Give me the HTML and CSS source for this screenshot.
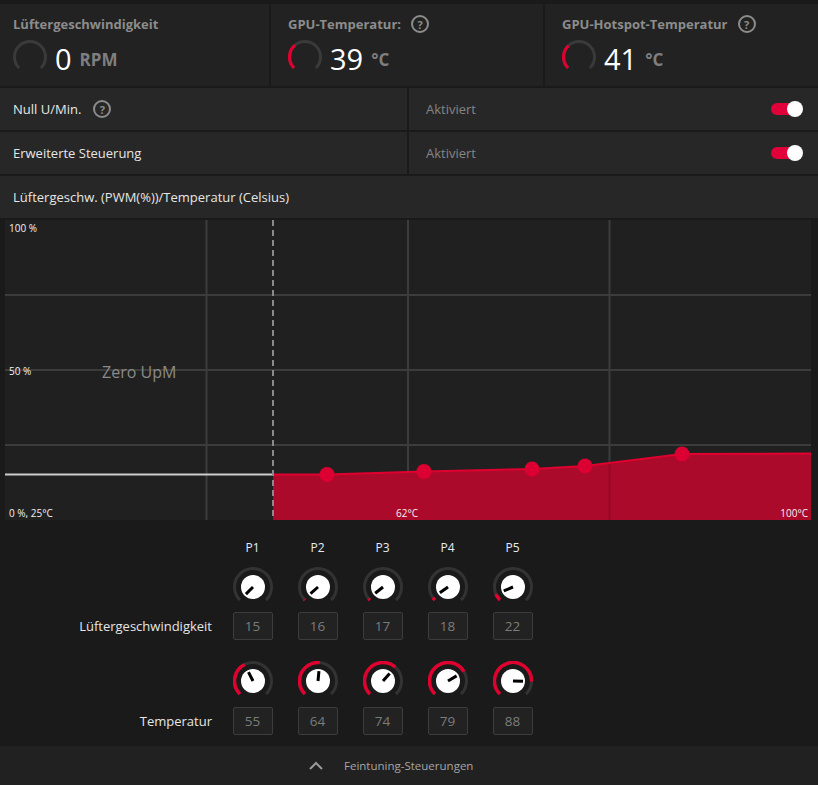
FILE: index.html
```html
<!DOCTYPE html>
<html lang="de">
<head>
<meta charset="utf-8">
<title>Lüftersteuerung</title>
<link rel="stylesheet" href="styles.css">
</head>
<body>
<div class="app">
  <div class="top">
    <div class="stats">
      <div class="stat stat-first">
        <div class="stat-title">Lüftergeschwindigkeit</div>
        <div class="stat-body">
          <svg class="gauge" width="36" height="36" viewBox="0 0 36 36">
            <path d="M7.04 28.96 A15.5 15.5 0 1 1 28.96 28.96" class="ring"/>
          </svg>
          <span class="stat-value">0</span><span class="stat-unit">RPM</span>
        </div>
      </div>
      <div class="stat">
        <div class="stat-title">GPU-Temperatur: <span class="help">?</span></div>
        <div class="stat-body">
          <svg class="gauge" width="36" height="36" viewBox="0 0 36 36">
            <path d="M7.04 28.96 A15.5 15.5 0 1 1 28.96 28.96" class="ring"/>
            <path d="M7.04 28.96 A15.5 15.5 0 0 1 8.04 6.13" class="ring-red"/>
          </svg>
          <span class="stat-value">39</span><span class="stat-unit">°C</span>
        </div>
      </div>
      <div class="stat">
        <div class="stat-title">GPU-Hotspot-Temperatur <span class="help">?</span></div>
        <div class="stat-body">
          <svg class="gauge" width="36" height="36" viewBox="0 0 36 36">
            <path d="M7.04 28.96 A15.5 15.5 0 1 1 28.96 28.96" class="ring"/>
            <path d="M7.04 28.96 A15.5 15.5 0 0 1 7.6 6.6" class="ring-red"/>
          </svg>
          <span class="stat-value">41</span><span class="stat-unit">°C</span>
        </div>
      </div>
    </div>

    <div class="row">
      <div class="cell cell-label">Null U/Min. <span class="help">?</span></div>
      <div class="cell cell-value"><span>Aktiviert</span><span class="toggle"></span></div>
    </div>
    <div class="row">
      <div class="cell cell-label">Erweiterte Steuerung</div>
      <div class="cell cell-value"><span>Aktiviert</span><span class="toggle"></span></div>
    </div>
    <div class="title-row">Lüftergeschw. (PWM(%))/Temperatur (Celsius)</div>

    <div class="chart">
      <svg class="chart-svg" width="806" height="300" viewBox="0 0 806 300">
        <g class="grid">
          <line x1="0" y1="75" x2="806" y2="75"/>
          <line x1="0" y1="150" x2="806" y2="150"/>
          <line x1="0" y1="225" x2="806" y2="225"/>
          <line x1="201.5" y1="0" x2="201.5" y2="300"/>
          <line x1="403" y1="0" x2="403" y2="300"/>
          <line x1="604.5" y1="0" x2="604.5" y2="300"/>
        </g>
        <line class="zero-line" x1="0" y1="254.5" x2="268" y2="254.5"/>
        <polygon class="area" points="268,254.5 322,254.5 419,251.5 527,249 580,246 677,234 806,233.5 806,300 268,300"/>
        <line class="grid-over" x1="604.5" y1="240" x2="604.5" y2="300"/>
        <polyline class="curve" points="268,254.5 322,254.5 419,251.5 527,249 580,246 677,234 806,233.5"/>
        <line class="dash" x1="268" y1="0" x2="268" y2="300"/>
        <g class="pts">
          <circle cx="322" cy="254.5" r="7.5"/>
          <circle cx="419" cy="251.5" r="7.5"/>
          <circle cx="527" cy="249" r="7.5"/>
          <circle cx="580" cy="246" r="7.5"/>
          <circle cx="677" cy="234" r="7.5"/>
        </g>
      </svg>
      <span class="clabel l-100">100 %</span>
      <span class="clabel l-50">50 %</span>
      <span class="zero-upm">Zero UpM</span>
      <span class="clabel l-0">0 %, 25°C</span>
      <span class="clabel l-62">62°C</span>
      <span class="clabel l-max">100°C</span>
    </div>
  </div>

  <div class="tuning">
    <div class="trow head">
      <div class="tlabel"></div>
      <div class="tcell">P1</div><div class="tcell">P2</div><div class="tcell">P3</div><div class="tcell">P4</div><div class="tcell">P5</div>
    </div>
    <div class="trow knobs knobs-fan">
      <div class="tlabel"></div>
      <div class="tcell">
        <svg class="knob" width="40" height="40" viewBox="0 0 40 40">
          <path class="kring" d="M6.92 33.08 A18.5 18.5 0 1 1 33.08 33.08"/>
          <circle class="kface" cx="20" cy="20" r="12"/>
          <line class="needle" x1="20" y1="20" x2="12.93" y2="27.07"/>
        </svg>
      </div>
      <div class="tcell">
        <svg class="knob" width="40" height="40" viewBox="0 0 40 40">
          <path class="kring" d="M6.92 33.08 A18.5 18.5 0 1 1 33.08 33.08"/>
          <path class="kred" d="M6.92 33.08 A18.5 18.5 0 0 1 6.21 32.33"/>
          <circle class="kface" cx="20" cy="20" r="12"/>
          <line class="needle" x1="20" y1="20" x2="12.54" y2="26.67"/>
        </svg>
      </div>
      <div class="tcell">
        <svg class="knob" width="40" height="40" viewBox="0 0 40 40">
          <path class="kring" d="M6.92 33.08 A18.5 18.5 0 1 1 33.08 33.08"/>
          <path class="kred" d="M6.92 33.08 A18.5 18.5 0 0 1 5.54 31.54"/>
          <circle class="kface" cx="20" cy="20" r="12"/>
          <line class="needle" x1="20" y1="20" x2="12.18" y2="26.24"/>
        </svg>
      </div>
      <div class="tcell">
        <svg class="knob" width="40" height="40" viewBox="0 0 40 40">
          <path class="kring" d="M6.92 33.08 A18.5 18.5 0 1 1 33.08 33.08"/>
          <path class="kred" d="M6.92 33.08 A18.5 18.5 0 0 1 4.94 30.74"/>
          <circle class="kface" cx="20" cy="20" r="12"/>
          <line class="needle" x1="20" y1="20" x2="11.86" y2="25.81"/>
        </svg>
      </div>
      <div class="tcell">
        <svg class="knob" width="40" height="40" viewBox="0 0 40 40">
          <path class="kring" d="M6.92 33.08 A18.5 18.5 0 1 1 33.08 33.08"/>
          <path class="kred" d="M6.92 33.08 A18.5 18.5 0 0 1 2.94 27.17"/>
          <circle class="kface" cx="20" cy="20" r="12"/>
          <line class="needle" x1="20" y1="20" x2="10.78" y2="23.88"/>
        </svg>
      </div>
    </div>
    <div class="trow boxes">
      <div class="tlabel">Lüftergeschwindigkeit</div>
      <div class="tcell"><span class="box">15</span></div>
      <div class="tcell"><span class="box">16</span></div>
      <div class="tcell"><span class="box">17</span></div>
      <div class="tcell"><span class="box">18</span></div>
      <div class="tcell"><span class="box">22</span></div>
    </div>
    <div class="trow knobs knobs-temp">
      <div class="tlabel"></div>
      <div class="tcell">
        <svg class="knob" width="40" height="40" viewBox="0 0 40 40">
          <path class="kring" d="M6.92 33.08 A18.5 18.5 0 1 1 33.08 33.08"/>
          <path class="kred" d="M6.92 33.08 A18.5 18.5 0 0 1 11.6 3.52"/>
          <circle class="kface" cx="20" cy="20" r="12"/>
          <line class="needle" x1="20" y1="20" x2="15.46" y2="11.09"/>
        </svg>
      </div>
      <div class="tcell">
        <svg class="knob" width="40" height="40" viewBox="0 0 40 40">
          <path class="kring" d="M6.92 33.08 A18.5 18.5 0 1 1 33.08 33.08"/>
          <path class="kred" d="M6.92 33.08 A18.5 18.5 0 0 1 21.74 1.58"/>
          <circle class="kface" cx="20" cy="20" r="12"/>
          <line class="needle" x1="20" y1="20" x2="20.94" y2="10.04"/>
        </svg>
      </div>
      <div class="tcell">
        <svg class="knob" width="40" height="40" viewBox="0 0 40 40">
          <path class="kring" d="M6.92 33.08 A18.5 18.5 0 1 1 33.08 33.08"/>
          <path class="kred" d="M6.92 33.08 A18.5 18.5 0 0 1 32.23 6.12"/>
          <circle class="kface" cx="20" cy="20" r="12"/>
          <line class="needle" x1="20" y1="20" x2="26.61" y2="12.5"/>
        </svg>
      </div>
      <div class="tcell">
        <svg class="knob" width="40" height="40" viewBox="0 0 40 40">
          <path class="kring" d="M6.92 33.08 A18.5 18.5 0 1 1 33.08 33.08"/>
          <path class="kred" d="M6.92 33.08 A18.5 18.5 0 1 1 35.92 10.58"/>
          <circle class="kface" cx="20" cy="20" r="12"/>
          <line class="needle" x1="20" y1="20" x2="28.61" y2="14.91"/>
        </svg>
      </div>
      <div class="tcell">
        <svg class="knob" width="40" height="40" viewBox="0 0 40 40">
          <path class="kring" d="M6.92 33.08 A18.5 18.5 0 1 1 33.08 33.08"/>
          <path class="kred" d="M6.92 33.08 A18.5 18.5 0 1 1 38.49 20.58"/>
          <circle class="kface" cx="20" cy="20" r="12"/>
          <line class="needle" x1="20" y1="20" x2="30" y2="20.31"/>
        </svg>
      </div>
    </div>
    <div class="trow boxes boxes-temp">
      <div class="tlabel">Temperatur</div>
      <div class="tcell"><span class="box">55</span></div>
      <div class="tcell"><span class="box">64</span></div>
      <div class="tcell"><span class="box">74</span></div>
      <div class="tcell"><span class="box">79</span></div>
      <div class="tcell"><span class="box">88</span></div>
    </div>
  </div>

  <div class="footer">
    <svg class="chevron" width="14" height="9" viewBox="0 0 14 9">
      <polyline points="1,8 7,2 13,8"/>
    </svg>
    <span class="footer-text">Feintuning-Steuerungen</span>
  </div>
</div>
</body>
</html>
```

FILE: styles.css
```css
* { box-sizing: border-box; }

html, body {
  margin: 0;
  padding: 0;
  background: #1a1a1a;
  font-family: "Open Sans", "Noto Sans", sans-serif;
  color: #e6e6e6;
}

.app {
  width: 818px;
  height: 785px;
  display: flex;
  flex-direction: column;
  overflow: hidden;
}

.top {
  display: flex;
  flex-direction: column;
  gap: 2px;
  padding-top: 4px;
}

/* stats */
.stats {
  display: grid;
  grid-template-columns: 269px 272px 1fr;
  gap: 2px;
  height: 82px;
}

.stat {
  background: #222222;
  padding: 10px 0 0 16px;
}

.stat-first {
  padding-left: 12px;
}

.stat-title {
  display: flex;
  align-items: center;
  gap: 10px;
  height: 20px;
  font-size: 13px;
  font-weight: 700;
  color: #8c8c8c;
  padding-left: 1px;
}

.stat-body {
  display: flex;
  align-items: center;
  margin-top: 5px;
  height: 36px;
}

.gauge { flex: none; }

.ring {
  fill: none;
  stroke: #3a3a3a;
  stroke-width: 3;
}

.ring-red {
  fill: none;
  stroke: #e0002f;
  stroke-width: 3.2;
}

.stat-value {
  margin-left: 7px;
  font-size: 29px;
  font-weight: 400;
  color: #ffffff;
  line-height: 36px;
  padding-top: 3px;
}

.stat-unit {
  margin-left: 8px;
  font-size: 17px;
  font-weight: 700;
  color: #7f7f7f;
  padding-top: 4px;
}

.help {
  display: inline-flex;
  align-items: center;
  justify-content: center;
  width: 18px;
  height: 18px;
  border: 2px solid #8c8c8c;
  border-radius: 50%;
  font-size: 11px;
  font-weight: 700;
  color: #8c8c8c;
  line-height: 1;
}

/* rows */
.row {
  display: grid;
  grid-template-columns: 407px 1fr;
  gap: 2px;
  height: 42px;
}

.cell {
  background: #272727;
  display: flex;
  align-items: center;
  font-size: 13px;
}

.cell-label {
  padding-left: 13px;
  color: #e6e6e6;
  gap: 12px;
}

.cell-value {
  padding: 0 15px 0 17px;
  color: #858585;
  justify-content: space-between;
}

.toggle {
  position: relative;
  width: 32px;
  height: 16px;
}

.toggle::before {
  content: "";
  position: absolute;
  left: 0;
  top: 2px;
  width: 26px;
  height: 12px;
  border-radius: 6px;
  background: #e0003a;
}

.toggle::after {
  content: "";
  position: absolute;
  right: 0;
  top: 0;
  width: 16px;
  height: 16px;
  border-radius: 50%;
  background: #ffffff;
}

.title-row {
  height: 42px;
  background: #272727;
  display: flex;
  align-items: center;
  padding-left: 13px;
  font-size: 13px;
  color: #e6e6e6;
}

/* chart */
.chart {
  position: relative;
  margin: 0 7px 0 5px;
  height: 300px;
  background: #202020;
}

.chart-svg { display: block; }

.grid line {
  stroke: #3c3c3c;
  stroke-width: 2;
}

.grid-over {
  stroke: rgba(0, 0, 0, 0.12);
  stroke-width: 2;
}

.zero-line {
  stroke: #cdcdcd;
  stroke-width: 2;
}

.area { fill: #ac0a2b; }

.curve {
  fill: none;
  stroke: #e0002f;
  stroke-width: 2;
}

.dash {
  stroke: #8a8a8a;
  stroke-width: 2;
  stroke-dasharray: 6 4;
}

.pts circle { fill: #dc0032; }

.clabel {
  position: absolute;
  font-size: 10px;
  line-height: 12px;
  color: #f2f2f2;
  white-space: nowrap;
}

.l-100 { left: 4px; top: 2px; }
.l-50 { left: 4px; top: 145px; }
.l-0 { left: 4px; top: 287px; }
.l-62 { left: 391px; top: 287px; }
.l-max { right: 3px; top: 287px; }

.zero-upm {
  position: absolute;
  left: 97px;
  top: 141px;
  font-size: 16px;
  line-height: 22px;
  color: #8a8a8a;
}

/* tuning */
.tuning {
  height: 226px;
  padding-top: 18px;
}

.trow {
  display: grid;
  grid-template-columns: 220px repeat(5, 65px);
  align-items: center;
}

.tcell {
  display: flex;
  justify-content: center;
}

.tlabel {
  text-align: right;
  padding-right: 8px;
  font-size: 13px;
  color: #e6e6e6;
}

.head {
  height: 18px;
  font-size: 12px;
  color: #e3ecf5;
}

.knobs { height: 40px; }
.knobs-fan { margin-top: 11px; }
.knobs-temp { margin-top: 21px; }
.boxes { height: 28px; margin-top: 5px; }
.boxes-temp { margin-top: 6px; }

.knob { display: block; }

.kring {
  fill: none;
  stroke: #333333;
  stroke-width: 3;
}

.kred {
  fill: none;
  stroke: #e0002f;
  stroke-width: 3.5;
}

.kface { fill: #ffffff; }

.needle {
  stroke: #000000;
  stroke-width: 3;
  stroke-linecap: butt;
}

.box {
  display: flex;
  align-items: center;
  justify-content: center;
  width: 40px;
  height: 28px;
  background: #222222;
  border: 1px solid #3c3c3c;
  border-radius: 2px;
  font-size: 13.5px;
  color: #7c7c7c;
}

/* footer */
.footer {
  flex: 1;
  background: #212121;
  display: flex;
  align-items: center;
  padding-left: 309px;
}

.chevron polyline {
  fill: none;
  stroke: #9a9a9a;
  stroke-width: 2;
}

.footer-text {
  margin-left: 21px;
  font-size: 11.5px;
  color: #a6a6a6;
}
```
